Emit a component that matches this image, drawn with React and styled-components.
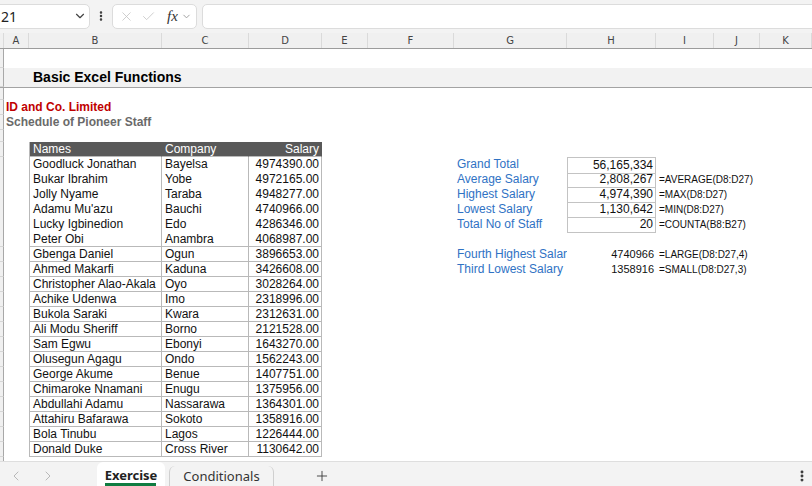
import styled, { createGlobalStyle } from 'styled-components';
import { ChevronDown, ChevronLeft, ChevronRight, X, Check, Plus, EllipsisVertical } from 'lucide-react';

const COLUMNS = [
  ['', 4],
  ['A', 25],
  ['B', 133],
  ['C', 87],
  ['D', 73],
  ['E', 46],
  ['F', 86],
  ['G', 113],
  ['H', 89],
  ['I', 58],
  ['J', 46],
  ['K', 52],
];
const TEMPLATE = COLUMNS.map((c) => `${c[1]}px`).join(' ');

const staff = [
  ['Goodluck Jonathan', 'Bayelsa', '4974390.00'],
  ['Bukar Ibrahim', 'Yobe', '4972165.00'],
  ['Jolly Nyame', 'Taraba', '4948277.00'],
  ["Adamu Mu'azu", 'Bauchi', '4740966.00'],
  ['Lucky Igbinedion', 'Edo', '4286346.00'],
  ['Peter Obi', 'Anambra', '4068987.00'],
  ['Gbenga Daniel', 'Ogun', '3896653.00'],
  ['Ahmed Makarfi', 'Kaduna', '3426608.00'],
  ['Christopher Alao-Akala', 'Oyo', '3028264.00'],
  ['Achike Udenwa', 'Imo', '2318996.00'],
  ['Bukola Saraki', 'Kwara', '2312631.00'],
  ['Ali Modu Sheriff', 'Borno', '2121528.00'],
  ['Sam Egwu', 'Ebonyi', '1643270.00'],
  ['Olusegun Agagu', 'Ondo', '1562243.00'],
  ['George Akume', 'Benue', '1407751.00'],
  ['Chimaroke Nnamani', 'Enugu', '1375956.00'],
  ['Abdullahi Adamu', 'Nassarawa', '1364301.00'],
  ['Attahiru Bafarawa', 'Sokoto', '1358916.00'],
  ['Bola Tinubu', 'Lagos', '1226444.00'],
  ['Donald Duke', 'Cross River', '1130642.00'],
];

// summary block beside the table, keyed by data row index
const stats = {
  0: { label: 'Grand Total', value: '56,165,334', boxed: true },
  1: { label: 'Average Salary', value: '2,808,267', boxed: true, note: '=AVERAGE(D8:D27)' },
  2: { label: 'Highest Salary', value: '4,974,390', boxed: true, note: '=MAX(D8:D27)' },
  3: { label: 'Lowest Salary', value: '1,130,642', boxed: true, note: '=MIN(D8:D27)' },
  4: { label: 'Total No of Staff', value: '20', boxed: true, note: '=COUNTA(B8:B27)' },
  6: { label: 'Fourth Highest Salary', value: '4740966', note: '=LARGE(D8:D27,4)' },
  7: { label: 'Third Lowest Salary', value: '1358916', note: '=SMALL(D8:D27,3)' },
};

const GlobalStyle = createGlobalStyle`
  html, body { margin: 0; padding: 0; background: #fff; }
  body { font-family: "Liberation Sans", Arial, sans-serif; }
  * { box-sizing: border-box; }
`;

const Page = styled.div`
  width: 812px;
  height: 486px;
  display: flex;
  flex-direction: column;
  overflow: hidden;
  background: #fff;
`;

/* ---------- formula bar ---------- */

const FormulaBar = styled.div`
  height: 33px;
  flex: none;
  display: flex;
  align-items: center;
  gap: 5px;
  padding-bottom: 1px;
  background: #f3f3f3;
  font-family: "Noto Sans", sans-serif;
`;

const NameBox = styled.div`
  width: 96px;
  height: 25px;
  margin-left: -6px;
  padding: 0 2px 0 6px;
  display: flex;
  align-items: center;
  justify-content: space-between;
  background: #fff;
  border: 1px solid #dcdcdc;
  border-radius: 5px;
  font-size: 14px;
  color: #222;
`;

const Kebab = styled.div`
  width: 12px;
  display: flex;
  justify-content: center;
  color: #333;
`;

const FxBox = styled.div`
  width: 85px;
  height: 25px;
  display: flex;
  align-items: center;
  gap: 7px;
  padding: 0 3px 0 6px;
  background: #fff;
  border: 1px solid #dcdcdc;
  border-radius: 5px;
  color: #c4c4c4;
`;

const Fx = styled.span`
  margin-left: 4px;
  margin-right: -4px;
  font-family: "Liberation Serif", serif;
  font-style: italic;
  font-size: 15px;
  color: #333;
`;

const FormulaInput = styled.div`
  flex: 1;
  height: 25px;
  margin-right: -6px;
  background: #fff;
  border: 1px solid #dcdcdc;
  border-radius: 5px;
`;

/* ---------- grid ---------- */

const HeaderRow = styled.div`
  flex: none;
  display: grid;
  grid-template-columns: ${TEMPLATE};
  height: 16px;
  background: #f0f0f0;
  border-bottom: 1px solid #9c9c9c;
`;

const ColumnLetter = styled.div`
  display: flex;
  align-items: center;
  justify-content: center;
  border-right: 1px solid #dadada;
  font-family: "DejaVu Sans", sans-serif;
  font-size: 10px;
  color: #444;
`;

const Sheet = styled.div`
  flex: 1;
  overflow: hidden;
`;

const Row = styled.div`
  display: grid;
  grid-template-columns: ${TEMPLATE};
  height: ${(p) => p.$h}px;
  background: ${(p) => p.$bg || 'transparent'};
  border-bottom: ${(p) => (p.$line ? '1px solid #a3a3a3' : 'none')};
  font-size: 12px;
  line-height: 15px;
  color: #111;
`;

const RowHead = styled.div`
  background: #f0f0f0;
  border-right: 1px solid #a8a8a8;
  border-bottom: 1px solid #d6d6d6;
`;

const Blank = styled.div``;

const Title = styled.div`
  grid-column: 3 / -1;
  padding-left: 4px;
  display: flex;
  align-items: center;
  font-weight: 700;
  font-size: 14px;
  color: #000;
`;

const Heading = styled.div`
  grid-column: 2 / -1;
  padding-left: 2px;
  white-space: nowrap;
  font-weight: 700;
  color: ${(p) => p.$color};
`;

const TableCell = styled.div`
  padding: 0 2px 0 3px;
  white-space: nowrap;
  overflow: hidden;
  text-align: ${(p) => (p.$right ? 'right' : 'left')};
  background: ${(p) => (p.$head ? '#595959' : '#fff')};
  color: ${(p) => (p.$head ? '#fff' : '#111')};
  border-right: 1px solid ${(p) => (p.$head ? '#595959' : '#b9b9b9')};
  border-bottom: 1px solid #b9b9b9;
  border-left: ${(p) => (p.$first ? '1px solid #b9b9b9' : 'none')};
`;

const StatLabel = styled.div`
  padding-left: 3px;
  white-space: nowrap;
  overflow: hidden;
  color: #2f72c4;
`;

const StatValue = styled.div`
  padding-right: 2px;
  text-align: right;
  white-space: nowrap;
  font-size: ${(p) => (p.$boxed ? 12 : 11)}px;
  border: ${(p) => (p.$boxed ? '1px solid #c3c3c3' : 'none')};
  border-top: ${(p) => (p.$top ? '1px solid #c3c3c3' : 'none')};
`;

const FormulaNote = styled.div`
  grid-column: 10 / -1;
  padding-left: 3px;
  white-space: nowrap;
  font-size: 10px;
  color: #111;
`;

/* ---------- sheet tabs ---------- */

const TabBar = styled.div`
  flex: none;
  height: 25px;
  display: flex;
  align-items: stretch;
  background: #f3f3f3;
  border-top: 1px solid #dedede;
  font-family: "Noto Sans", sans-serif;
  font-size: 13px;
`;

const Nav = styled.div`
  width: 32px;
  padding-top: 4px;
  display: flex;
  align-items: center;
  justify-content: center;
  color: #b8b8b8;
`;

const Tab = styled.div`
  display: flex;
  align-items: center;
  justify-content: center;
  position: relative;
  width: ${(p) => p.$w}px;
  margin-left: ${(p) => p.$ml || 0}px;
  padding-top: ${(p) => (p.$sep ? 0 : 2)}px;
  background: ${(p) => (p.$active ? '#fff' : 'transparent')};
  border-radius: 6px 6px 0 0;
  font-weight: ${(p) => (p.$active ? 700 : 400)};
  color: ${(p) => (p.$active ? '#222' : '#333')};
  border-left: ${(p) => (p.$sep ? '1px solid #cfcfcf' : 'none')};
  border-right: ${(p) => (p.$sep ? '1px solid #cfcfcf' : 'none')};
  margin-top: ${(p) => (p.$sep ? 4 : 0)}px;

  &::after {
    content: '';
    display: ${(p) => (p.$active ? 'block' : 'none')};
    position: absolute;
    left: 8px;
    right: 9px;
    bottom: 0;
    height: 3px;
    background: #107c41;
  }
`;

const AddSheet = styled.div`
  width: 48px;
  margin-left: 24px;
  padding-top: 4px;
  display: flex;
  align-items: center;
  justify-content: center;
  color: #333;
`;

const Spacer = styled.div`
  flex: 1;
`;

const More = styled.div`
  width: 20px;
  padding-top: 4px;
  display: flex;
  align-items: center;
  justify-content: center;
  color: #333;
`;

const EmptyCells = ({ count }) =>
  Array.from({ length: count }, (_, i) => <Blank key={i} />);

const DataRow = ({ person, index }) => {
  const s = stats[index];
  return (
    <Row $h={15}>
      <RowHead />
      <Blank />
      <TableCell $first>{person[0]}</TableCell>
      <TableCell>{person[1]}</TableCell>
      <TableCell $right>{person[2]}</TableCell>
      <Blank />
      <Blank />
      {s ? <StatLabel>{s.label}</StatLabel> : <Blank />}
      {s ? (
        <StatValue $boxed={s.boxed} $top={index === 0}>
          {s.value}
        </StatValue>
      ) : (
        <Blank />
      )}
      {s && s.note ? <FormulaNote>{s.note}</FormulaNote> : <EmptyCells count={3} />}
    </Row>
  );
};

const App = () => (
  <Page>
    <GlobalStyle />
    <FormulaBar>
      <NameBox>
        <span>21</span>
        <ChevronDown size={14} color="#444" />
      </NameBox>
      <Kebab>
        <EllipsisVertical size={14} strokeWidth={3} />
      </Kebab>
      <FxBox>
        <X size={15} strokeWidth={1.3} />
        <Check size={15} strokeWidth={1.3} />
        <Fx>fx</Fx>
        <ChevronDown size={11} color="#999" />
      </FxBox>
      <FormulaInput />
    </FormulaBar>

    <HeaderRow>
      {COLUMNS.map(([letter], i) => (
        <ColumnLetter key={i}>{letter}</ColumnLetter>
      ))}
    </HeaderRow>

    <Sheet>
      <Row $h={19}>
        <RowHead />
      </Row>
      <Row $h={20} $bg="#f2f2f2" $line>
        <RowHead />
        <Blank />
        <Title>Basic Excel Functions</Title>
      </Row>
      <Row $h={12}>
        <RowHead />
      </Row>
      <Row $h={15}>
        <RowHead />
        <Heading $color="#c00000">ID and Co. Limited</Heading>
      </Row>
      <Row $h={15}>
        <RowHead />
        <Heading $color="#6a6a6a">Schedule of Pioneer Staff</Heading>
      </Row>
      <Row $h={12}>
        <RowHead />
      </Row>
      <Row $h={15}>
        <RowHead />
        <Blank />
        <TableCell $head $first>Names</TableCell>
        <TableCell $head>Company</TableCell>
        <TableCell $head $right>Salary</TableCell>
      </Row>
      {staff.map((person, i) => (
        <DataRow key={person[0]} person={person} index={i} />
      ))}
      <Row $h={15}>
        <RowHead />
      </Row>
    </Sheet>

    <TabBar>
      <Nav>
        <ChevronLeft size={16} strokeWidth={1.5} />
      </Nav>
      <Nav>
        <ChevronRight size={16} strokeWidth={1.5} />
      </Nav>
      <Tab $active $w={68} $ml={33}>
        Exercise
      </Tab>
      <Tab $sep $w={105} $ml={4}>
        Conditionals
      </Tab>
      <AddSheet>
        <Plus size={16} strokeWidth={1.3} />
      </AddSheet>
      <Spacer />
      <More>
        <EllipsisVertical size={14} strokeWidth={3} />
      </More>
    </TabBar>
  </Page>
);

export default App;
